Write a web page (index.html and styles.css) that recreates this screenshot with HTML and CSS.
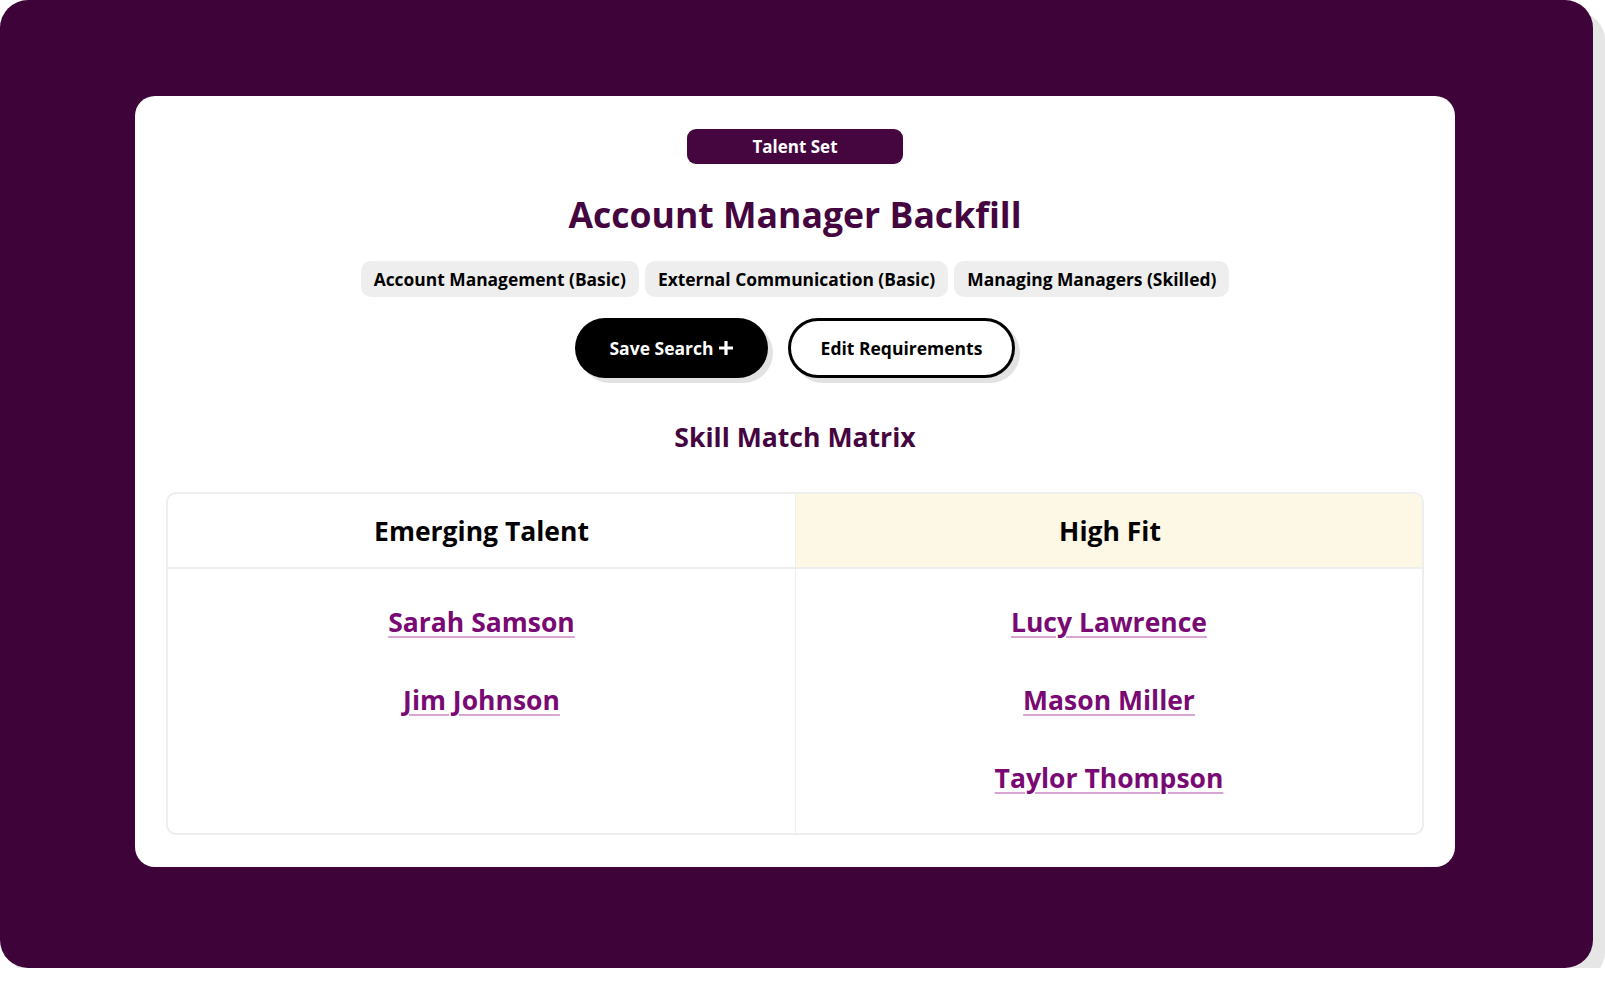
FILE: index.html
```html
<!DOCTYPE html>
<html lang="en">
<head>
<meta charset="utf-8">
<title>Account Manager Backfill</title>
<link rel="stylesheet" href="styles.css">
</head>
<body>
<div class="frame">
  <main class="card">
    <div class="label">Talent Set</div>
    <h1 class="title">Account Manager Backfill</h1>
    <ul class="tags">
      <li class="tag">Account Management (Basic)</li>
      <li class="tag">External Communication (Basic)</li>
      <li class="tag">Managing Managers (Skilled)</li>
    </ul>
    <div class="actions">
      <button class="btn btn-dark" type="button">Save Search
        <svg class="plus" viewBox="0 0 16 16" width="16" height="16" aria-hidden="true"><path d="M8 1v14M1 8h14" stroke="#fff" stroke-width="3.2" fill="none"/></svg>
      </button>
      <button class="btn btn-light" type="button">Edit Requirements</button>
    </div>
    <h2 class="subtitle">Skill Match Matrix</h2>
    <section class="matrix">
      <div class="head">Emerging Talent</div>
      <div class="head head-fit">High Fit</div>
      <div class="cell">
        <a class="person" href="#">Sarah Samson</a>
        <a class="person" href="#">Jim Johnson</a>
      </div>
      <div class="cell cell-right">
        <a class="person" href="#">Lucy Lawrence</a>
        <a class="person" href="#">Mason Miller</a>
        <a class="person" href="#">Taylor Thompson</a>
      </div>
    </section>
  </main>
</div>
</body>
</html>
```

FILE: styles.css
```css
* { box-sizing: border-box; }

html, body {
  margin: 0;
  padding: 0;
  background: #ffffff;
  font-family: "Open Sans", "Noto Sans", "Liberation Sans", sans-serif;
}

.frame {
  width: 1593px;
  height: 968px;
  background: #3e0339;
  border-radius: 28px;
  box-shadow: 12px 12px 0 0 #e6e6e6;
  padding: 96px 0 0 135px;
}

.card {
  width: 1320px;
  background: #ffffff;
  border-radius: 20px;
  padding: 33px 31px 32px;
  display: flex;
  flex-direction: column;
  align-items: center;
}

.label {
  background: #45063f;
  color: #ffffff;
  font-weight: 700;
  font-size: 17px;
  line-height: 35px;
  height: 35px;
  width: 216px;
  text-align: center;
  border-radius: 9px;
}

.title {
  margin: 27px 0 0;
  font-size: 35.6px;
  line-height: 46px;
  font-weight: 700;
  color: #45063f;
}

.tags {
  list-style: none;
  margin: 24px 0 0;
  padding: 0;
  display: flex;
  gap: 6px;
}

.tag {
  background: #eeeeee;
  border-radius: 10px;
  padding: 7px 13px;
  font-size: 17.4px;
  line-height: 22px;
  font-weight: 700;
  color: #000000;
}

.actions {
  margin-top: 21px;
  display: flex;
  gap: 20px;
}

.btn {
  height: 60px;
  border-radius: 30px;
  font-family: inherit;
  font-size: 17.5px;
  font-weight: 700;
  display: flex;
  align-items: center;
  justify-content: center;
  gap: 4px;
  box-shadow: 5px 5px 0 0 #e2e2e2;
  cursor: pointer;
}

.btn-dark {
  width: 193px;
  background: #000000;
  color: #ffffff;
  border: none;
}

.btn-light {
  width: 227px;
  background: #ffffff;
  color: #000000;
  border: 3px solid #000000;
}

.plus { display: block; }

.subtitle {
  margin: 41px 0 0;
  font-size: 26.6px;
  line-height: 36px;
  font-weight: 700;
  color: #45063f;
}

.matrix {
  margin-top: 37px;
  width: 100%;
  display: grid;
  grid-template-columns: 1fr 1fr;
  border: 2px solid #eeeeee;
  border-radius: 10px;
  overflow: hidden;
}

.head {
  height: 75px;
  display: flex;
  align-items: center;
  justify-content: center;
  font-size: 26.5px;
  font-weight: 700;
  color: #000000;
  border-bottom: 2px solid #eeeeee;
}

.head-fit {
  background: #fdf7e5;
  border-left: 1px solid #eeeeee;
  margin: -2px -2px 0 0;
  height: 77px;
  padding-top: 2px;
}

.cell {
  padding: 14px 0 16px;
  display: flex;
  flex-direction: column;
  align-items: center;
}

.cell-right { border-left: 1px solid #eeeeee; }

.person {
  height: 78px;
  display: flex;
  align-items: center;
  font-size: 26.5px;
  font-weight: 700;
  color: #7a0a73;
  text-decoration: underline;
  text-decoration-color: #d7a4d4;
  text-decoration-thickness: 2px;
  text-underline-offset: 4px;
}
```
